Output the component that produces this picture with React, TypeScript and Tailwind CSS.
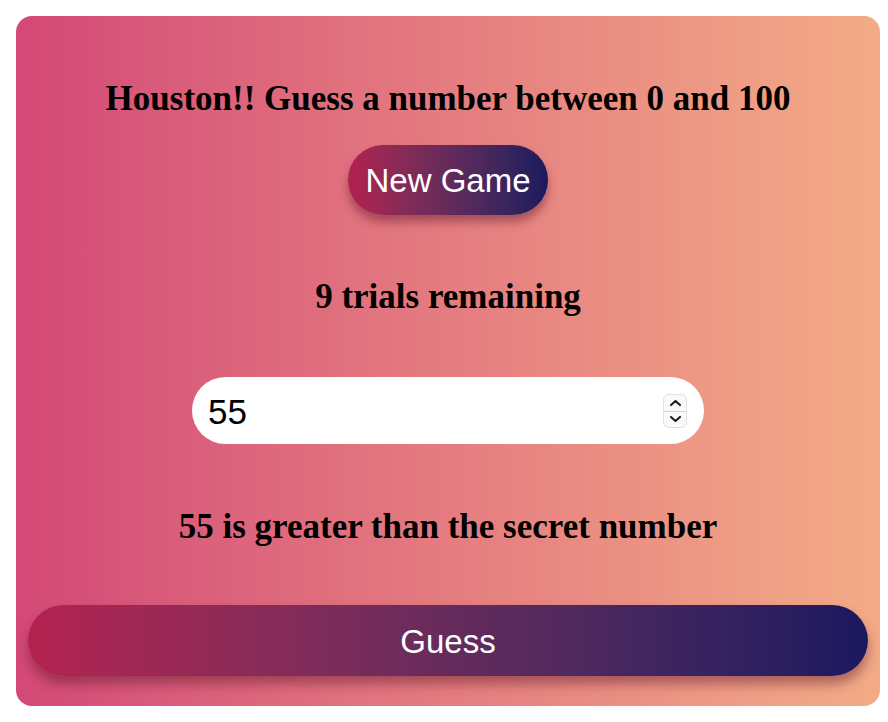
import React, { useState } from 'react';

const serif = { fontFamily: '"Liberation Serif", "Times New Roman", serif' };
const sans = { fontFamily: '"Liberation Sans", Arial, sans-serif' };

const App: React.FC = () => {
    const [guess, setGuess] = useState('55');
    const trials = 9;

    return (
        <div className="w-[888px] h-[722px] bg-white p-4">
            <div className="w-[864px] h-[690px] rounded-2xl bg-gradient-to-r from-[#d34877] to-[#f3ab87] flex flex-col items-center pt-[63px] px-3 pb-[30px]">
                <h1 className="text-[35px] leading-[40px] font-bold text-black" style={serif}>
                    Houston!! Guess a number between 0 and 100
                </h1>

                <button
                    className="mt-[26px] w-[200px] h-[70px] rounded-full bg-gradient-to-r from-[#b21f4f] to-[#1a1a5e] text-white text-[33px] leading-none shadow-[0_7px_10px_rgba(90,20,40,0.45)]"
                    style={sans}
                >
                    New Game
                </button>

                <h2 className="mt-[62px] text-[35px] leading-[40px] font-bold text-black" style={serif}>
                    {trials} trials remaining
                </h2>

                <div className="relative mt-[60px] w-[512px] h-[67px] rounded-full bg-white">
                    <input
                        type="text"
                        value={guess}
                        onChange={(e) => setGuess(e.target.value)}
                        className="w-full h-full rounded-full bg-transparent pl-4 pr-14 pt-[2px] text-[35px] text-black outline-none"
                        style={sans}
                    />
                    {/* spinner */}
                    <div className="absolute right-[17px] top-[17px] w-[24px] h-[34px] rounded-md border border-[#e0e0e0] bg-[#fafafa] flex flex-col">
                        <div className="flex-1 flex items-center justify-center border-b border-[#d4d4d4]">
                            <svg width="13" height="8" viewBox="0 0 13 8">
                                <path d="M2 6 L6.5 2 L11 6" fill="none" stroke="#222" strokeWidth="2.2" strokeLinecap="round" strokeLinejoin="round" />
                            </svg>
                        </div>
                        <div className="flex-1 flex items-center justify-center">
                            <svg width="13" height="8" viewBox="0 0 13 8">
                                <path d="M2 2 L6.5 6 L11 2" fill="none" stroke="#222" strokeWidth="2.2" strokeLinecap="round" strokeLinejoin="round" />
                            </svg>
                        </div>
                    </div>
                </div>

                <p className="mt-[63px] text-[35px] leading-[40px] font-bold text-black" style={serif}>
                    {guess} is greater than the secret number
                </p>

                <button
                    className="mt-[58px] w-[840px] h-[71px] rounded-full bg-gradient-to-r from-[#b52150] to-[#1b1860] text-white text-[33px] leading-none pt-[2px] shadow-[0_8px_12px_rgba(90,20,40,0.45)]"
                    style={sans}
                >
                    Guess
                </button>
            </div>
        </div>
    );
};

export default App;
